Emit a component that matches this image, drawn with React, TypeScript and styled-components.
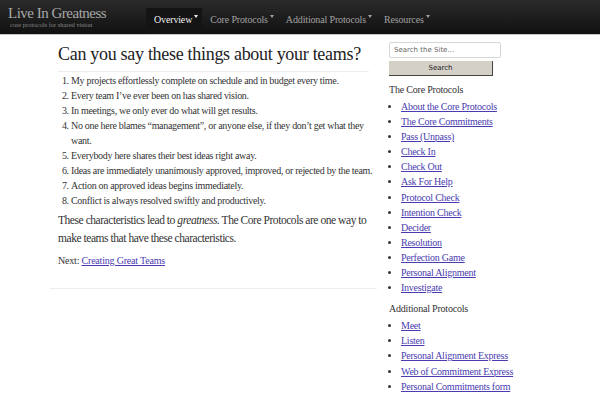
import styled, { createGlobalStyle } from 'styled-components';

const GlobalStyle = createGlobalStyle`
  html, body {
    margin: 0;
    padding: 0;
    background: #fff;
  }
  body {
    font-family: "Liberation Serif", "Times New Roman", serif;
    color: #333;
  }
`;

const coreProtocols = [
  'About the Core Protocols',
  'The Core Commitments',
  'Pass (Unpass)',
  'Check In',
  'Check Out',
  'Ask For Help',
  'Protocol Check',
  'Intention Check',
  'Decider',
  'Resolution',
  'Perfection Game',
  'Personal Alignment',
  'Investigate',
];

const additionalProtocols = [
  'Meet',
  'Listen',
  'Personal Alignment Express',
  'Web of Commitment Express',
  'Personal Commitments form',
];

const statements = [
  'My projects effortlessly complete on schedule and in budget every time.',
  'Every team I\u2019ve ever been on has shared vision.',
  'In meetings, we only ever do what will get results.',
  'No one here blames \u201cmanagement\u201d, or anyone else, if they don\u2019t get what they want.',
  'Everybody here shares their best ideas right away.',
  'Ideas are immediately unanimously approved, improved, or rejected by the team.',
  'Action on approved ideas begins immediately.',
  'Conflict is always resolved swiftly and productively.',
];

const navItems = ['Overview', 'Core Protocols', 'Additional Protocols', 'Resources'];

const App = () => {
  return (
    <>
      <GlobalStyle />
      <NavBar>
        <Brand>
          <BrandName>Live In Greatness</BrandName>
          <Tagline>core protocols for shared vision</Tagline>
        </Brand>
        <NavList>
          {navItems.map((item, i) => (
            <NavItem key={item} $active={i === 0}>
              {item}
              <Caret />
            </NavItem>
          ))}
        </NavList>
      </NavBar>

      <Page>
        <Main>
          <Title>Can you say these things about your teams?</Title>
          <Statements>
            {statements.map((s) => (
              <li key={s}>{s}</li>
            ))}
          </Statements>
          <Lead>
            These characteristics lead to <em>greatness.</em> The Core Protocols are one way to
            make teams that have these characteristics.
          </Lead>
          <NextLine>
            Next: <a href="#">Creating Great Teams</a>
          </NextLine>
          <Rule />
        </Main>

        <Sidebar>
          <SearchInput placeholder="Search the Site..." />
          <SearchButton type="button">Search</SearchButton>
          <SideHeading>The Core Protocols</SideHeading>
          <LinkList>
            {coreProtocols.map((p) => (
              <li key={p}>
                <a href="#">{p}</a>
              </li>
            ))}
          </LinkList>
          <SideHeading>Additional Protocols</SideHeading>
          <LinkList>
            {additionalProtocols.map((p) => (
              <li key={p}>
                <a href="#">{p}</a>
              </li>
            ))}
          </LinkList>
        </Sidebar>
      </Page>
    </>
  );
};

export default App;

const NavBar = styled.header`
  height: 35px;
  display: flex;
  align-items: stretch;
  background: linear-gradient(#2a2a2a, #111);
  border-bottom: 1px solid #c8c8c8;
  box-sizing: border-box;
`;

const Brand = styled.div`
  width: 146px;
  padding: 5px 0 0 8px;
  box-sizing: border-box;
  display: flex;
  flex-direction: column;
`;

const BrandName = styled.div`
  font-size: 15px;
  line-height: 16px;
  letter-spacing: -0.5px;
  color: #a8a8a8;
`;

const Tagline = styled.div`
  font-size: 6.5px;
  line-height: 8px;
  color: #8a8a8a;
  padding-left: 2px;
`;

const NavList = styled.nav`
  display: flex;
  align-items: stretch;
  padding-top: 8px;
`;

const NavItem = styled.div<{ $active?: boolean }>`
  display: flex;
  align-items: center;
  padding: 0 4px 4px 8px;
  font-size: 10px;
  letter-spacing: -0.15px;
  color: ${(p) => (p.$active ? '#eee' : '#a0a0a0')};
  background: ${(p) => (p.$active ? '#141414' : 'transparent')};
  white-space: nowrap;
`;

const Caret = styled.span`
  display: inline-block;
  margin-left: 2px;
  margin-bottom: 6px;
  border-left: 2px solid transparent;
  border-right: 2px solid transparent;
  border-top: 3px solid currentColor;
`;

const Page = styled.div`
  display: flex;
  gap: 12px;
  padding-left: 50px;
`;

const Main = styled.main`
  width: 327px;
  padding-top: 7px;
`;

const Title = styled.h1`
  margin: 0 8px;
  padding-bottom: 5px;
  font-size: 18px;
  line-height: 24px;
  letter-spacing: -0.3px;
  font-weight: normal;
  color: #222;
  border-bottom: 1px solid #eee;
  white-space: nowrap;
`;

const Statements = styled.ol`
  margin: 1px 0 0 8px;
  padding-left: 13px;
  font-size: 10px;
  line-height: 15px;
  letter-spacing: -0.3px;
`;

const Lead = styled.p`
  margin: 3px 8px 0 8px;
  font-size: 11.5px;
  line-height: 18px;
  letter-spacing: -0.45px;
`;

const NextLine = styled.p`
  margin: 6px 8px 0 8px;
  font-size: 10px;
  line-height: 15px;
  letter-spacing: -0.2px;
  a {
    color: #4a3bb0;
  }
`;

const Rule = styled.hr`
  margin: 20px 0 0 0;
  border: 0;
  border-top: 1px solid #eee;
`;

const Sidebar = styled.aside`
  width: 200px;
  padding-top: 7px;
  display: flex;
  flex-direction: column;
  align-items: flex-start;
`;

const SearchInput = styled.input`
  width: 112px;
  height: 16px;
  box-sizing: border-box;
  border: 1px solid #d6d6d6;
  border-radius: 2px;
  padding: 0 4px;
  font-family: "DejaVu Sans", sans-serif;
  font-size: 7px;
  color: #555;
  &::placeholder {
    color: #666;
  }
`;

const SearchButton = styled.button`
  margin-top: 3px;
  width: 104px;
  height: 15px;
  box-sizing: border-box;
  padding: 0;
  background: #d4d0c8;
  border: 0;
  border-right: 1px solid #444;
  border-bottom: 1px solid #444;
  font-family: "DejaVu Sans", sans-serif;
  font-size: 7px;
  color: #222;
`;

const SideHeading = styled.div`
  margin-top: 6px;
  font-size: 10px;
  line-height: 15px;
  letter-spacing: -0.2px;
  color: #333;
`;

const LinkList = styled.ul`
  margin: 2px 0 0 0;
  padding-left: 12px;
  font-size: 10px;
  line-height: 15.1px;
  letter-spacing: -0.25px;
  a {
    color: #4a3bb0;
  }
`;
